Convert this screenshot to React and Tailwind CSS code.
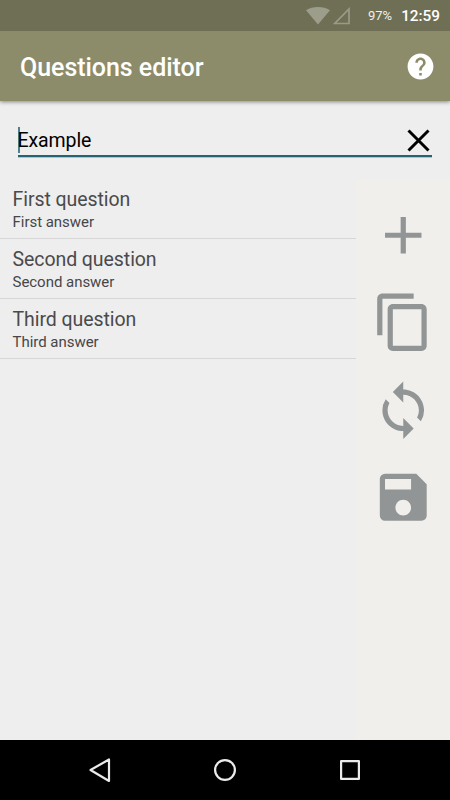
import { MdAdd, MdContentCopy, MdSync, MdSave, MdHelp } from 'react-icons/md'

const QUESTIONS = [
  { question: 'First question',  answer: 'First answer' },
  { question: 'Second question', answer: 'Second answer' },
  { question: 'Third question',  answer: 'Third answer' },
]

const ACTIONS = [
  { label: 'Add',    icon: MdAdd },
  { label: 'Copy',   icon: MdContentCopy },
  { label: 'Switch', icon: MdSync },
  { label: 'Save',   icon: MdSave },
]

function StatusBar() {
  return (
    <div className="relative z-10 flex h-[31px] shrink-0 items-center bg-[#6f6f55] pl-[306px] pt-px text-white">
      <svg width="24" height="18" viewBox="0 0 24 18" fill="#9d9d8b">
        <path d="M12 17.500 0 3.200C3.400.9 7.500 0 12 0s8.600.9 12 3.200z" />
      </svg>
      <svg className="ml-[3px]" width="17" height="18" viewBox="0 0 17 18" fill="none" stroke="#9a9a87" strokeWidth="1.700">
        <path d="M16 2v14.500H1.800z" />
      </svg>
      <span className="ml-[18px] text-[13px] text-[#f0f0ec]">97%</span>
      <span className="ml-[9px] text-[15.300px] font-medium">12:59</span>
    </div>
  )
}

function NavBar() {
  return (
    <nav className="flex h-[60px] shrink-0 items-center justify-between bg-black px-[85px]">
      <svg width="30" height="30" viewBox="0 0 30 30" fill="none" stroke="#ebebeb" strokeWidth="2.200" strokeLinejoin="round">
        <path d="M24 4.500v21.500L5.500 15z" />
      </svg>
      <svg width="30" height="30" viewBox="0 0 30 30" fill="none" stroke="#ebebeb" strokeWidth="2.200">
        <circle cx="15" cy="15" r="9.900" />
      </svg>
      <svg width="30" height="30" viewBox="0 0 30 30" fill="none" stroke="#ebebeb" strokeWidth="2.200" strokeLinejoin="round">
        <path d="M6.100 6.100h17.800v17.800H6.100z" />
      </svg>
    </nav>
  )
}

export default function App() {
  return (
    <div className="flex h-[800px] w-[450px] flex-col overflow-hidden bg-[#eeeeee] font-['Roboto',sans-serif]">
      <StatusBar />

      {/* Toolbar */}
      <header className="flex h-[70px] shrink-0 items-center justify-between bg-[#8c8c6a] pl-5 pr-[14.500px] text-white shadow-[0_1px_4px_rgba(0,0,0,0.45)]">
        <h1 className="pt-[3px] text-[25px] font-medium leading-none tracking-[-0.04px]">Questions editor</h1>
        <MdHelp size={31} />
      </header>

      {/* Set name */}
      <div className="flex h-[78px] shrink-0 flex-col px-[18px] pt-[25px]">
        <div className="flex h-[31px] items-start justify-between border-b-2 border-[#256472] shadow-[0_1px_0_rgba(37,100,114,0.3)]">
          <div className="flex h-[27px] items-center">
            <span className="-mr-[2px] h-[26px] w-[1.500px] bg-[#256472]/80" />
            <span className="pt-[2px] text-[19.500px] leading-none tracking-[-0.1px] text-black">Example</span>
          </div>
          <svg className="mr-[2px] mt-[2.500px]" width="23" height="23" viewBox="0 0 23 23" stroke="#000" strokeWidth="3">
            <path d="M1.500 1.500l20 20M21.500 1.500l-20 20" />
          </svg>
        </div>
      </div>

      <main className="flex min-h-0 flex-1">
        <ul className="flex-1">
          {QUESTIONS.map(({ question, answer }) => (
            <li key={question} className="flex h-[60px] flex-col border-b border-[#d6d6d6] pl-[12.500px] pt-[9px]">
              <p className="text-[19.500px] leading-6 tracking-[-0.07px] text-[#4a4a4c]">{question}</p>
              <p className="text-[15px] leading-5 tracking-[-0.03px] text-[#464648]">{answer}</p>
            </li>
          ))}
        </ul>
        <aside className="flex w-[94px] flex-col items-center gap-[25px] bg-[#f0efeb] pt-[24.500px] text-[#929596]">
          {ACTIONS.map(({ label, icon: Icon }) => (
            <button key={label} aria-label={label}>
              <Icon size={62.5} />
            </button>
          ))}
        </aside>
      </main>

      <NavBar />
    </div>
  )
}
